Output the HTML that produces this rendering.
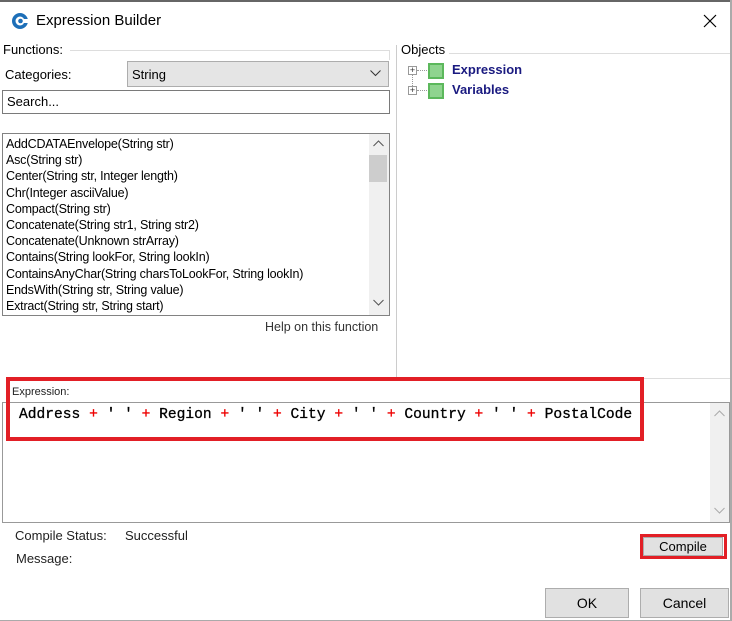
<!DOCTYPE html>
<html><head><style>
*{box-sizing:border-box;margin:0;padding:0}
body{width:732px;height:621px;background:#fff;font-family:"Liberation Sans",sans-serif;font-size:12px;color:#000;position:relative;overflow:hidden}
.a{position:absolute;white-space:nowrap}
.btn{position:absolute;background:#e1e1e1;border:1px solid #adadad;text-align:center;font-size:13px}
</style></head><body>
<div class="a" style="left:0;top:0;width:732px;height:2px;background:#666"></div>
<div class="a" style="left:730px;top:0;width:2px;height:621px;background:#aaa"></div>
<div class="a" style="left:0;top:620px;width:732px;height:1px;background:#aaa"></div>
<svg class="a" style="left:11px;top:12px" width="18" height="18" viewBox="0 0 18 18"><circle cx="9" cy="9" r="8" fill="#1d6fb8"/><circle cx="9" cy="9" r="4.5" fill="#fff"/><circle cx="9.5" cy="9" r="2.3" fill="#1d6fb8"/><rect x="13" y="7" width="5" height="4" fill="#fff"/></svg>
<div class="a" style="left:36px;top:12px;font-size:15px">Expression Builder</div>
<svg class="a" style="left:703px;top:14px" width="14" height="14"><path d="M1 1L13 13M13 1L1 13" stroke="#000" stroke-width="1.2"/></svg>
<div class="a" style="left:70px;top:50px;width:320px;height:1px;background:#ddd"></div>
<div class="a" style="left:389px;top:50px;width:1px;height:10px;background:#ddd"></div>
<div class="a" style="left:3px;top:42px;font-size:13px">Functions:</div>
<div class="a" style="left:5px;top:67px;font-size:13px">Categories:</div>
<div class="a" style="left:127px;top:61px;width:262px;height:26px;background:#e5e5e5;border:1px solid #adadad"></div>
<div class="a" style="left:132px;top:67px;font-size:13px">String</div>
<svg class="a" style="left:370px;top:70px" width="11" height="7"><path d="M0.5 0.5L5.5 5.5L10.5 0.5" stroke="#333" fill="none"/></svg>
<div class="a" style="left:2px;top:90px;width:388px;height:24px;border:1px solid #7a7a7a"></div>
<div class="a" style="left:7px;top:94px;font-size:13px">Search...</div>
<div class="a" style="left:2px;top:133px;width:388px;height:183px;border:1px solid #828282"></div>
<div class="a" style="left:369px;top:134px;width:20px;height:181px;background:#f0f0f0"></div>
<div class="a" style="left:369px;top:155px;width:18px;height:27px;background:#cdcdcd"></div>
<svg class="a" style="left:373px;top:140px" width="11" height="7"><path d="M0.5 6L5.5 1L10.5 6" stroke="#555" fill="none"/></svg>
<svg class="a" style="left:373px;top:299px" width="11" height="7"><path d="M0.5 1L5.5 6L10.5 1" stroke="#555" fill="none"/></svg>
<div class="a" style="left:6px;top:136px;font-size:12.5px;line-height:16.2px;letter-spacing:-0.2px">AddCDATAEnvelope(String str)<br>Asc(String str)<br>Center(String str, Integer length)<br>Chr(Integer asciiValue)<br>Compact(String str)<br>Concatenate(String str1, String str2)<br>Concatenate(Unknown strArray)<br>Contains(String lookFor, String lookIn)<br>ContainsAnyChar(String charsToLookFor, String lookIn)<br>EndsWith(String str, String value)<br>Extract(String str, String start)</div>
<div class="a" style="left:265px;top:320px;font-size:12.5px;color:#333">Help on this function</div>
<div class="a" style="left:396px;top:45px;width:1px;height:334px;background:#ccc"></div>
<div class="a" style="left:449px;top:53px;width:281px;height:1px;background:#ddd"></div>
<div class="a" style="left:397px;top:378px;width:333px;height:1px;background:#ddd"></div>
<div class="a" style="left:401px;top:42px;font-size:13px">Objects</div>
<div class="a" style="left:408px;top:66px;width:9px;height:9px;border:1px solid #999;font-size:9px;line-height:7px;text-align:center;color:#333">+</div>
<div class="a" style="left:408px;top:86px;width:9px;height:9px;border:1px solid #999;font-size:9px;line-height:7px;text-align:center;color:#333">+</div>
<div class="a" style="left:412px;top:75px;height:11px;border-left:1px dotted #999"></div>
<div class="a" style="left:417px;top:70px;width:10px;border-top:1px dotted #999"></div>
<div class="a" style="left:417px;top:90px;width:10px;border-top:1px dotted #999"></div>
<div class="a" style="left:428px;top:63px;width:16px;height:16px;background:#8fd48f;border:2px solid #5cb85c"></div>
<div class="a" style="left:428px;top:83px;width:16px;height:16px;background:#8fd48f;border:2px solid #5cb85c"></div>
<div class="a" style="left:452px;top:62px;font-size:13px;font-weight:bold;color:#1a1a80">Expression</div>
<div class="a" style="left:452px;top:82px;font-size:13px;font-weight:bold;color:#1a1a80">Variables</div>
<div class="a" style="left:2px;top:402px;width:728px;height:121px;border:1px solid #999"></div>
<div class="a" style="left:710px;top:403px;width:19px;height:119px;background:#f0f0f0"></div>
<svg class="a" style="left:714px;top:410px" width="11" height="7"><path d="M0.5 6L5.5 1L10.5 6" stroke="#aaa" fill="none"/></svg>
<svg class="a" style="left:714px;top:507px" width="11" height="7"><path d="M0.5 1L5.5 6L10.5 1" stroke="#aaa" fill="none"/></svg>
<div class="a" style="left:12px;top:386px;font-size:11px;color:#222">Expression:</div>
<div class="a" style="left:19px;top:407px;font-family:'Liberation Mono',monospace;font-size:14.6px;color:#000;-webkit-text-stroke:0.3px #000">Address <span style="color:#e00;-webkit-text-stroke:0.3px #e00">+</span> ' ' <span style="color:#e00;-webkit-text-stroke:0.3px #e00">+</span> Region <span style="color:#e00;-webkit-text-stroke:0.3px #e00">+</span> ' ' <span style="color:#e00;-webkit-text-stroke:0.3px #e00">+</span> City <span style="color:#e00;-webkit-text-stroke:0.3px #e00">+</span> ' ' <span style="color:#e00;-webkit-text-stroke:0.3px #e00">+</span> Country <span style="color:#e00;-webkit-text-stroke:0.3px #e00">+</span> ' ' <span style="color:#e00;-webkit-text-stroke:0.3px #e00">+</span> PostalCode</div>
<div class="a" style="left:6px;top:377px;width:638px;height:64px;border:4px solid #e21f26"></div>
<div class="a" style="left:15px;top:528px;font-size:13px;color:#222">Compile Status:</div>
<div class="a" style="left:125px;top:528px;font-size:13px;color:#222">Successful</div>
<div class="a" style="left:16px;top:551px;font-size:13px;color:#222">Message:</div>
<div class="btn" style="left:643px;top:537px;width:80px;height:19px;line-height:17px">Compile</div>
<div class="a" style="left:640px;top:534px;width:87px;height:25px;border:3px solid #e21f26"></div>
<div class="btn" style="left:545px;top:588px;width:84px;height:30px;line-height:28px;font-size:14px">OK</div>
<div class="btn" style="left:640px;top:588px;width:89px;height:30px;line-height:28px;font-size:14px">Cancel</div>
</body></html>
